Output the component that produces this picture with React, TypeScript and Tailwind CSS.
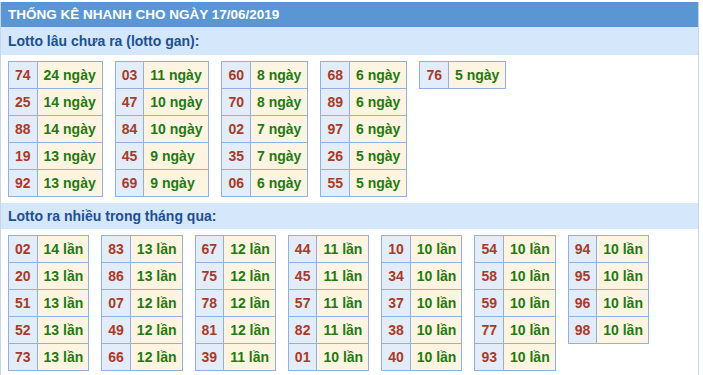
import React from 'react';

type Row = [string, string];

const gan: Row[][] = [
  [['74', '24'], ['25', '14'], ['88', '14'], ['19', '13'], ['92', '13']],
  [['03', '11'], ['47', '10'], ['84', '10'], ['45', '9'], ['69', '9']],
  [['60', '8'], ['70', '8'], ['02', '7'], ['35', '7'], ['06', '6']],
  [['68', '6'], ['89', '6'], ['97', '6'], ['26', '5'], ['55', '5']],
  [['76', '5']],
];

const nhieu: Row[][] = [
  [['02', '14'], ['20', '13'], ['51', '13'], ['52', '13'], ['73', '13']],
  [['83', '13'], ['86', '13'], ['07', '12'], ['49', '12'], ['66', '12']],
  [['67', '12'], ['75', '12'], ['78', '12'], ['81', '12'], ['39', '11']],
  [['44', '11'], ['45', '11'], ['57', '11'], ['82', '11'], ['01', '10']],
  [['10', '10'], ['34', '10'], ['37', '10'], ['38', '10'], ['40', '10']],
  [['54', '10'], ['58', '10'], ['59', '10'], ['77', '10'], ['93', '10']],
  [['94', '10'], ['95', '10'], ['96', '10'], ['98', '10']],
];

function LottoTable({ rows, unit, pr }: { rows: Row[]; unit: string; pr: string }) {
  return (
    <table className="border-collapse self-start">
      <tbody>
        {rows.map(([num, count]) => (
          <tr key={num} className="h-[27px]">
            <td className="border border-[#8fb0e0] bg-[#e3edfa] px-[6px] text-[#a93a26]">{num}</td>
            <td className={`border border-[#8fb0e0] bg-[#fef4e2] pl-[6px] ${pr} text-[#1f7a10]`}>
              {count} {unit}
            </td>
          </tr>
        ))}
      </tbody>
    </table>
  );
}

function SubHeader({ title, h }: { title: string; h: string }) {
  return (
    <div className={`${h} flex items-center bg-[#d5e7fa] pl-[7px] text-[14px] font-bold text-[#1d4f92]`}>
      {title}
    </div>
  );
}

export default function App() {
  return (
    <div className="w-[703px] h-[375px] overflow-hidden bg-white pt-[2px] font-['Liberation_Sans',Arial,sans-serif]">
      <div className="w-[699px] border-x border-[#c7d5e6] min-h-[380px]">
        <div className="h-[25px] bg-[#5b96d4] pl-[7px] text-[13.5px] leading-[25px] font-bold text-white">
          THỐNG KÊ NHANH CHO NGÀY 17/06/2019
        </div>
        <SubHeader title="Lotto lâu chưa ra (lotto gan):" h="h-[28px]" />
        <div className="flex gap-3 pl-[7px] pt-[6px] pb-[6px] text-[14px] font-bold">
          {gan.map((t, i) => (
            <LottoTable key={i} rows={t} unit="ngày" pr="pr-[6px]" />
          ))}
        </div>
        <SubHeader title="Lotto ra nhiều trong tháng qua:" h="h-[26px]" />
        <div className="flex gap-3 pl-[7px] pt-[6px] text-[14px] font-bold">
          {nhieu.map((t, i) => (
            <LottoTable key={i} rows={t} unit="lần" pr="pr-[5px]" />
          ))}
        </div>
      </div>
    </div>
  );
}
